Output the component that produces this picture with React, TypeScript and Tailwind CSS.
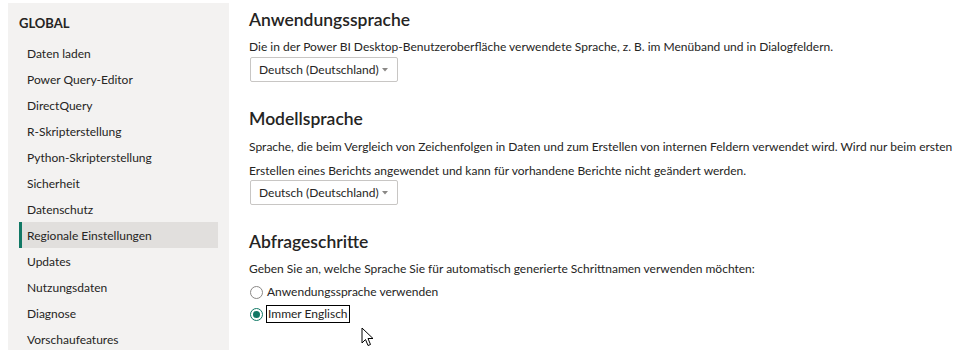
import { ReactNode } from "react";

const NAV_ITEMS = [
  "Daten laden",
  "Power Query-Editor",
  "DirectQuery",
  "R-Skripterstellung",
  "Python-Skripterstellung",
  "Sicherheit",
  "Datenschutz",
  "Regionale Einstellungen",
  "Updates",
  "Nutzungsdaten",
  "Diagnose",
  "Vorschaufeatures",
];

const ACTIVE = "Regionale Einstellungen";

function Sidebar() {
  return (
    <aside className="ml-[8px] mt-[3px] w-[221px] shrink-0 bg-[#f3f2f1] flex flex-col">
      <div className="pl-[11px] pt-[10px] h-[37px] shrink-0 text-[13px] font-bold text-[#252423] leading-[20px]">
        GLOBAL
      </div>
      {NAV_ITEMS.map((item) => {
        const active = item === ACTIVE;
        return (
          <div
            key={item}
            className={
              active
                ? "mx-[11px] h-[26px] shrink-0 flex items-center pl-[5px] pt-[1px] border-l-[3px] border-[#117865] bg-[#e1dfdd] text-[12px] text-[#252423]"
                : "mx-[11px] h-[26px] shrink-0 flex items-center pl-[8px] pt-[1px] text-[12px] text-[#252423]"
            }
          >
            {item}
          </div>
        );
      })}
    </aside>
  );
}

function Dropdown() {
  return (
    <div className="w-[148px] h-[25px] border border-[#c8c6c4] rounded-[2px] bg-white flex items-center justify-between pl-[8px] pr-[9px] text-[12px] text-[#252423]">
      <span>Deutsch (Deutschland)</span>
      <svg width="6" height="4" viewBox="0 0 6 4">
        <path d="M0 0 L6 0 L3 3.5 Z" fill="#8a8886" />
      </svg>
    </div>
  );
}

function Heading({ children }: { children: ReactNode }) {
  return (
    <h2 className="text-[17.5px] font-semibold leading-[24px] text-[#252423]">
      {children}
    </h2>
  );
}

function Radio({ checked, children }: { checked?: boolean; children: ReactNode }) {
  return (
    <div className="flex items-center h-[22px]">
      {checked ? (
        <span className="w-[13px] h-[13px] rounded-full border border-[#117865] flex items-center justify-center">
          <span className="w-[7px] h-[7px] rounded-full bg-[#117865]" />
        </span>
      ) : (
        <span className="w-[13px] h-[13px] rounded-full border border-[#8a8886]" />
      )}
      {checked ? (
        <span className="ml-[3px] px-[1px] border border-black leading-[16px]">{children}</span>
      ) : (
        <span className="ml-[4px]">{children}</span>
      )}
    </div>
  );
}

export default function App() {
  return (
    <div
      className="relative w-[977px] h-[350px] overflow-hidden bg-white flex"
      style={{ fontFamily: 'Lato, "Open Sans", sans-serif' }}
    >
      <Sidebar />

      <main className="pl-[20px] flex flex-col text-[12px] text-[#252423] whitespace-nowrap">
        <div className="mt-[8px]">
          <Heading>Anwendungssprache</Heading>
        </div>
        <p className="mt-[3px] leading-[24px]">
          Die in der Power BI Desktop-Benutzeroberfläche verwendete Sprache, z. B. im Menüband und in Dialogfeldern.
        </p>
        <div className="mt-[-2px] pl-[1px]">
          <Dropdown />
        </div>

        <div className="mt-[25px]">
          <Heading>Modellsprache</Heading>
        </div>
        <p className="mt-[4px] leading-[24px]">
          Sprache, die beim Vergleich von Zeichenfolgen in Daten und zum Erstellen von internen Feldern verwendet wird. Wird nur beim ersten
          <br />
          Erstellen eines Berichts angewendet und kann für vorhandene Berichte nicht geändert werden.
        </p>
        <div className="mt-[-3px] pl-[1px]">
          <Dropdown />
        </div>

        <div className="mt-[25px]">
          <Heading>Abfrageschritte</Heading>
        </div>
        <p className="mt-[3px] leading-[24px]">
          Geben Sie an, welche Sprache Sie für automatisch generierte Schrittnamen verwenden möchten:
        </p>
        <div className="mt-[0px] pl-[1px] flex flex-col">
          <Radio>Anwendungssprache verwenden</Radio>
          <Radio checked>Immer Englisch</Radio>
        </div>
      </main>

      {/* mouse pointer */}
      <svg className="absolute left-[361px] top-[327px]" width="13" height="20" viewBox="0 0 13 20">
        <path d="M1 1 L1 16 L4.5 12.5 L7 18.5 L9.5 17.5 L7 11.5 L12 11.5 Z" fill="white" stroke="black" strokeWidth="1" strokeLinejoin="round" />
      </svg>
    </div>
  );
}
